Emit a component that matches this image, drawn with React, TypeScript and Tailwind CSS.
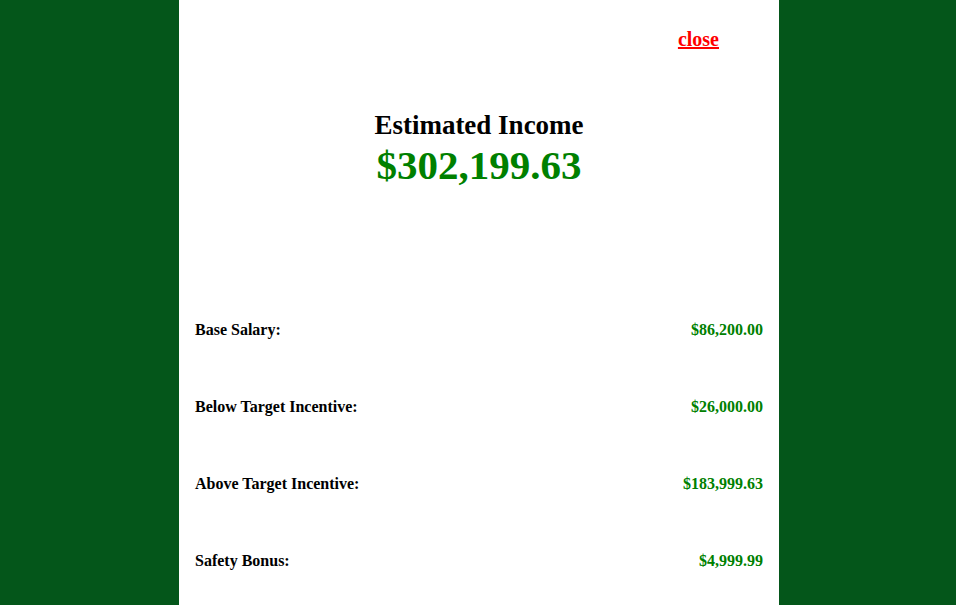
export default function App() {
  const rows = [
    { label: "Base Salary:", value: "$86,200.00" },
    { label: "Below Target Incentive:", value: "$26,000.00" },
    { label: "Above Target Incentive:", value: "$183,999.63" },
    { label: "Safety Bonus:", value: "$4,999.99" },
  ]

  return (
    <div className="h-[605px] w-full overflow-hidden bg-[#04561a] font-['Liberation_Serif',serif]">
      <div className="ml-[179px] h-full w-[600px] bg-white">
        <div className="flex justify-end pr-[60px] pt-[28px]">
          <a href="#" className="text-[20px] font-bold leading-[23px] text-[#ff0000] underline">
            close
          </a>
        </div>

        <div className="mt-[59px] text-center">
          <h1 className="text-[27px] font-bold leading-[30px] text-black">Estimated Income</h1>
          <div className="mt-[2px] text-[41px] font-bold leading-[46px] text-[#008000]">$302,199.63</div>
        </div>

        <div className="mt-[103px] px-4">
          {rows.map((row, index) => (
            <div key={index} className="flex h-[77px] items-center justify-between text-[16px] font-bold">
              <span className="text-black">{row.label}</span>
              <span className="text-[#008000]">{row.value}</span>
            </div>
          ))}
        </div>
      </div>
    </div>
  )
}
